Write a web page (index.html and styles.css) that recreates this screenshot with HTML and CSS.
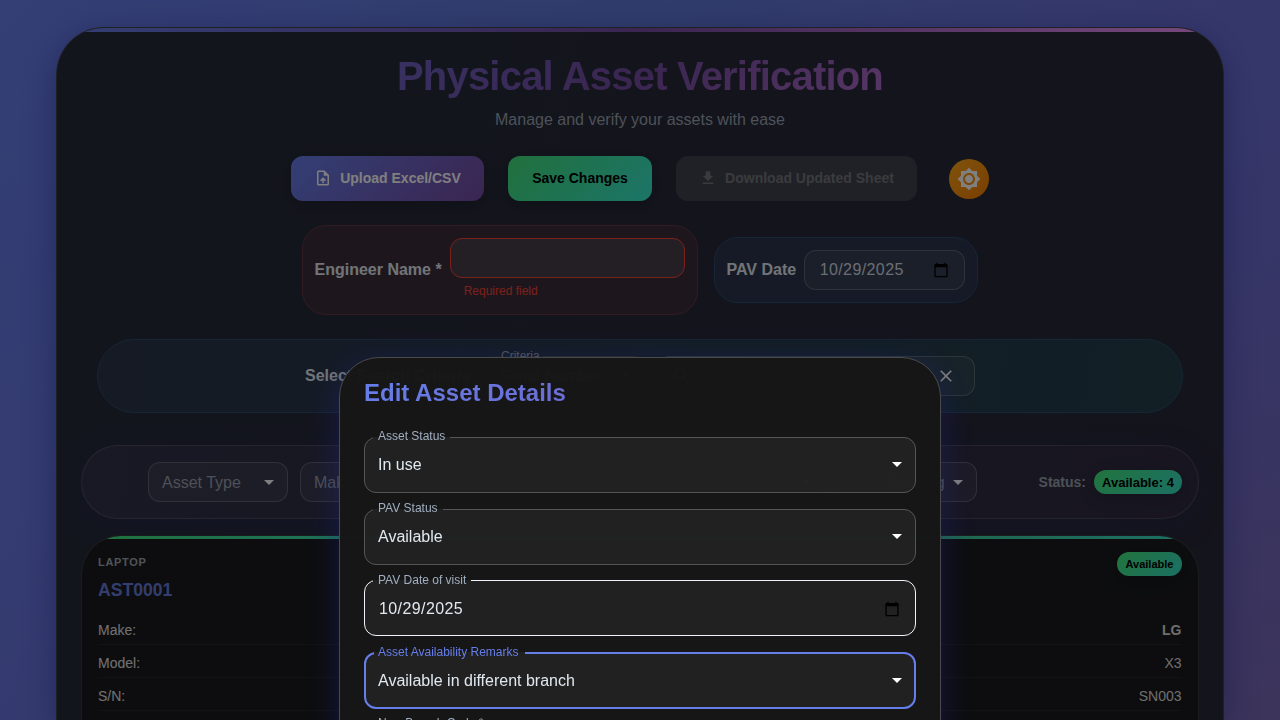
FILE: index.html
```html
<!DOCTYPE html>
<html lang="en">
<head>
<meta charset="utf-8">
<title>Physical Asset Verification</title>
<link rel="stylesheet" href="styles.css">
</head>
<body>
<main class="container">
  <h1 class="title">Physical Asset Verification</h1>
  <p class="subtitle">Manage and verify your assets with ease</p>
  <div class="actions">
    <button class="btn btn-upload"><svg width="18" height="18" viewBox="0 0 24 24"><path d="M14 2H6c-1.1 0-1.99.9-1.99 2L4 20c0 1.1.89 2 1.99 2H18c1.1 0 2-.9 2-2V8zm4 18H6V4h7v5h5zM8 15.01l1.41 1.41L11 14.84V19h2v-4.16l1.59 1.59L16 15.01 12.01 11z"/></svg>Upload Excel/CSV</button>
    <button class="btn btn-save">Save Changes</button>
    <button class="btn btn-download"><svg width="18" height="18" viewBox="0 0 24 24"><path d="M5 20h14v-2H5zM19 9h-4V3H9v6H5l7 7z"/></svg>Download Updated Sheet</button>
    <button class="theme" aria-label="Theme"><svg width="24" height="24" viewBox="0 0 24 24"><path d="M20 8.69V4h-4.69L12 .69 8.69 4H4v4.69L.69 12 4 15.31V20h4.69L12 23.31 15.31 20H20v-4.69L23.31 12zM12 18c-3.31 0-6-2.69-6-6s2.69-6 6-6 6 2.69 6 6-2.69 6-6 6m0-10c-2.21 0-4 1.79-4 4s1.79 4 4 4 4-1.79 4-4-1.79-4-4-4"/></svg></button>
  </div>
  <div class="meta">
    <div class="panel engineer"><b>Engineer Name *</b><div class="entry"><div class="input error"></div><span class="help">Required field</span></div></div>
    <div class="panel pav"><b>PAV Date</b><div class="input date"><span class="date-text">10/29/2025</span><svg class="cal" width="16" height="16" viewBox="0 0 24 24"><path d="M20 3h-1V1h-2v2H7V1H5v2H4c-1.1 0-2 .9-2 2v16c0 1.1.9 2 2 2h16c1.1 0 2-.9 2-2V5c0-1.1-.9-2-2-2zm0 18H4V8h16v13z"/></svg></div></div>
  </div>
  <section class="search">
    <b class="search-label">Select Search Criteria:</b>
    <div class="small criteria"><span class="label">Criteria</span><fieldset><legend>Criteria</legend></fieldset>Serial Number<i class="arrow"></i></div>
    <div class="input find"><svg width="20" height="20" viewBox="0 0 24 24"><path d="M15.5 14h-.79l-.28-.27A6.47 6.47 0 0 0 16 9.5 6.5 6.5 0 1 0 9.5 16c1.61 0 3.09-.59 4.23-1.57l.27.28v.79l5 4.99L20.49 19zm-6 0C7.01 14 5 11.99 5 9.5S7.01 5 9.5 5 14 7.01 14 9.5 11.99 14 9.5 14"/></svg><svg width="20" height="20" viewBox="0 0 24 24"><path d="M19 6.41 17.59 5 12 10.59 6.41 5 5 6.41 10.59 12 5 17.59 6.41 19 12 13.41 17.59 19 19 17.59 13.41 12z"/></svg></div>
  </section>
  <section class="filters">
    <div class="selects">
      <div class="input select w140">Asset Type<i class="arrow"></i></div>
      <div class="input select wide">Make<i class="arrow"></i></div>
      <div class="input select w140 end">Pending<i class="arrow"></i></div>
    </div>
    <div class="status"><b>Status:</b><span class="chip">Available: 4</span></div>
  </section>
  <article class="card">
    <header><span class="kind">LAPTOP</span><span class="chip mini">Available</span></header>
    <h2>AST0001</h2>
    <div class="row"><span>Make:</span><b>LG</b></div>
    <div class="row"><span>Model:</span><span class="dim">X3</span></div>
    <div class="row"><span>S/N:</span><span class="dim">SN003</span></div>
  </article>
</main>
<div class="backdrop"></div>
<div class="modal" role="dialog">
  <h2 class="modal-title">Edit Asset Details</h2>
  <div class="field"><span class="label">Asset Status</span><fieldset><legend>Asset Status</legend></fieldset>In use<i class="arrow"></i></div>
  <div class="field"><span class="label">PAV Status</span><fieldset><legend>PAV Status</legend></fieldset>Available<i class="arrow"></i></div>
  <div class="field hover"><span class="label">PAV Date of visit</span><fieldset><legend>PAV Date of visit</legend></fieldset><span class="date-text">10/29/2025</span><svg class="cal" width="16" height="16" viewBox="0 0 24 24"><path d="M20 3h-1V1h-2v2H7V1H5v2H4c-1.1 0-2 .9-2 2v16c0 1.1.9 2 2 2h16c1.1 0 2-.9 2-2V5c0-1.1-.9-2-2-2zm0 18H4V8h16v13z"/></svg></div>
  <div class="field focus"><span class="label">Asset Availability Remarks</span><fieldset><legend>Asset Availability Remarks</legend></fieldset>Available in different branch<i class="arrow"></i></div>
  <div class="field"><span class="label">New Branch Code *</span><fieldset><legend>New Branch Code *</legend></fieldset></div>
</div>
</body>
</html>
```
FILE: styles.css
```css
* { box-sizing: border-box; }
html, body { height: 720px; overflow: hidden; }
body {
  margin: 0;
  padding: 27px 56px 0;
  font-family: "Liberation Sans", Arial, sans-serif;
  font-size: 16px;
  color: #e2e8f0;
  background:
    radial-gradient(ellipse at 100% 110%, rgba(150,110,130,.3), transparent 50%),
    radial-gradient(ellipse at 50% 0, rgba(80,130,200,.35), transparent 45%),
    linear-gradient(135deg, #667eea 0%, #764ba2 210%);
}
.container {
  position: relative;
  z-index: 0;
  height: 693px;
  padding: 24px;
  border: 1px solid #40434e;
  border-bottom: 0;
  border-radius: 48px 48px 0 0;
  overflow: hidden;
  background: linear-gradient(100deg, #262b3a, #292838);
  box-shadow: 0 8px 32px rgba(31,38,135,.45);
}
.container::before {
  content: "";
  position: absolute;
  inset: 0 0 auto;
  height: 4px;
  background: linear-gradient(90deg, #667eea, #764ba2, #f093fb);
}
.title {
  margin: 0;
  font-size: 40px;
  line-height: 48px;
  letter-spacing: -.8px;
  text-align: center;
  color: transparent;
  background: linear-gradient(135deg, #667eea, #764ba2 50%, #f093fb);
  -webkit-background-clip: text;
  background-clip: text;
}
.subtitle { margin: 8px 0 24px; line-height: 24px; text-align: center; color: #9ba3b0; }
.actions { display: flex; justify-content: center; align-items: center; gap: 24px; height: 45px; }
.btn {
  display: flex; align-items: center; justify-content: center; gap: 8px;
  height: 45px; padding: 0 0 2px;
  border: 0; border-radius: 12px;
  font: bold 14px "Liberation Sans", Arial, sans-serif;
  white-space: nowrap;
  box-shadow: 0 4px 15px rgba(0,0,0,.2);
}
.btn svg { flex: none; fill: currentColor; }
.btn-upload { width: 193px; color: #fff; background: linear-gradient(135deg, #667eea, #764ba2); }
.btn-save { width: 144px; color: #000; background: linear-gradient(135deg, #42e07a, #38ead0); }
.btn-download { width: 241px; color: #75777d; background: #41424d; box-shadow: none; }
.theme {
  display: flex; align-items: center; justify-content: center;
  width: 40px; height: 40px; margin: 0 0 0 8px; padding: 0;
  border: 0; border-radius: 50%;
  background: linear-gradient(135deg, #ffa91a, #f57c00);
}
.theme svg { fill: #fff; }
.meta { display: flex; justify-content: center; align-items: center; gap: 16px; margin-top: 24px; height: 90px; }
.panel { display: flex; align-items: center; gap: 8px; padding: 12px 12px 12px 11.5px; border: 1px solid; border-radius: 24px; }
.engineer { width: 396px; height: 90px; background: #3d2d3a; border-color: #663644; }
.pav { width: 264px; height: 66px; background: #2b354c; border-color: #2c4d70; }
.input {
  display: flex; align-items: center;
  height: 40px; padding: 0 14px;
  border: 1px solid rgba(255,255,255,.2); border-radius: 12px;
  background: rgba(255,255,255,.05);
}
.panel b { white-space: nowrap; }
.engineer .input { width: 235px; border-color: #f44336; background: #483e48; }
.help { display: block; margin: 3px 14px 1px; font-size: 12px; line-height: 20px; color: #f44336; }
.date { width: 161px; justify-content: space-between; color: #d5dbe3; }
.date-text { letter-spacing: .4px; }
.date .date-text { margin-left: .5px; }
.cal { fill: #000; }
.date .cal { margin-right: 1px; }
.search {
  display: flex; align-items: center; justify-content: center;
  height: 74px; margin: 24px 16px 0;
  border: 1px solid #2c4d6c; border-radius: 37px;
  background: linear-gradient(100deg, #2b354a, #243e4a);
}
.search-label { width: 180px; white-space: nowrap; }
.small {
  position: relative; display: flex; align-items: center; justify-content: space-between;
  width: 160px; height: 40px; margin-right: 12px; padding: 0 14px;
  border-radius: 12px; background: rgba(255,255,255,.05);
}
.criteria .label { left: 16px; top: -8px; }
.find { width: 318px; justify-content: space-between; padding-right: 18px; }
.find svg { fill: #fff; }
.filters {
  display: flex; align-items: center; justify-content: space-between;
  height: 74px; margin-top: 32px; padding: 0 16px 0 66px;
  border: 1px solid rgba(255,255,255,.13); border-radius: 37px;
  background: linear-gradient(100deg, #303249, #302b40);
  box-shadow: 0 8px 32px rgba(31,38,135,.2);
}
.selects { display: flex; gap: 12px; }
.select { color: #9aa1ae; justify-content: space-between; padding: 1px 13px 0; }
.w140 { width: 140px; }
.wide { width: 525px; }
.end { padding-left: 48px; }
.arrow { width: 0; height: 0; margin-top: -1px; border: 5px solid transparent; border-top-color: #fff; border-bottom: 0; flex: none; }
.status { display: flex; align-items: center; gap: 8px; font-size: 14px; color: #9aa1ae; }
.chip {
  display: flex; align-items: center; justify-content: center;
  width: 88px; height: 24px; border-radius: 12px;
  font-size: 13px; font-weight: bold; color: #000;
  background: linear-gradient(135deg, #43e97b, #38e0c8);
  box-shadow: 0 4px 15px rgba(0,0,0,.2);
}
.mini { width: 65px; font-size: 11px; }
.card {
  position: relative;
  height: 185px; margin-top: 16px; padding: 16px;
  border: 1px solid rgba(255,255,255,.12); border-bottom: 0; border-radius: 40px 40px 0 0;
  overflow: hidden; background: #1a1b1e;
}
.card::before {
  content: ""; position: absolute; inset: 0 0 auto; height: 3px;
  background: linear-gradient(90deg, #42e57d, #38e0c8 35%, #42c890 70%, #38e0c8);
}
.card header { display: flex; justify-content: space-between; height: 24px; }
.kind { font-size: 11px; font-weight: bold; letter-spacing: .7px; line-height: 20px; color: #a0a6b1; }
.card h2 { margin: 4px 0 12px; font-size: 17.6px; line-height: 20px; color: #667ddc; }
.row { display: flex; justify-content: space-between; height: 33px; padding: 10px .5px 0 0; font-size: 14px; line-height: 16px; border-bottom: 1px solid rgba(255,255,255,.05); color: #e2e2e4; }
.row b, .dim { color: #ddd; }
.backdrop { position: fixed; inset: 0; background: rgba(0,0,0,.5); }
.modal {
  position: fixed; left: 339px; top: 357px;
  width: 602px; height: 500px; padding: 19px 24px;
  border: 1px solid #4a4a4a; border-radius: 40px;
  background: rgba(22,22,22,.985);
  box-shadow: 0 8px 32px rgba(31,38,135,.42);
}
.modal-title {
  margin: 0 0 28px; font-size: 24px; line-height: 32px; color: transparent;
  background: linear-gradient(135deg, #667eea, #764ba2 120%);
  -webkit-background-clip: text; background-clip: text;
}
.field {
  position: relative; display: flex; align-items: center; justify-content: space-between;
  height: 56px; margin-bottom: 16px; padding: 0 14px;
  border-radius: 12px; background: rgba(255,255,255,.05);
}
fieldset {
  position: absolute; inset: -5px 0 0; min-width: 0;
  margin: 0; padding: 0 8px;
  border: 1px solid #555; border-radius: 12px; pointer-events: none;
}
legend { height: 11px; padding: 0 6px 0 4px; font-size: 12px; line-height: 11px; white-space: nowrap; visibility: hidden; }
.label { position: absolute; z-index: 1; left: 14px; top: -9px; font-size: 12px; line-height: 17px; color: #a0aec0; white-space: nowrap; }
.hover { margin-top: -1px; padding: 2px 14px 0 15px; }
.hover .label, .focus .label { top: -8px; }
.hover fieldset { border-color: #f0f4fa; }
.hover .cal { margin: -1px 2px 0 0; }
.focus { height: 57px; margin-bottom: 15px; padding-top: 1px; }
.focus .label { color: #667eea; }
.focus fieldset { border: 2px solid #667eea; }
```
